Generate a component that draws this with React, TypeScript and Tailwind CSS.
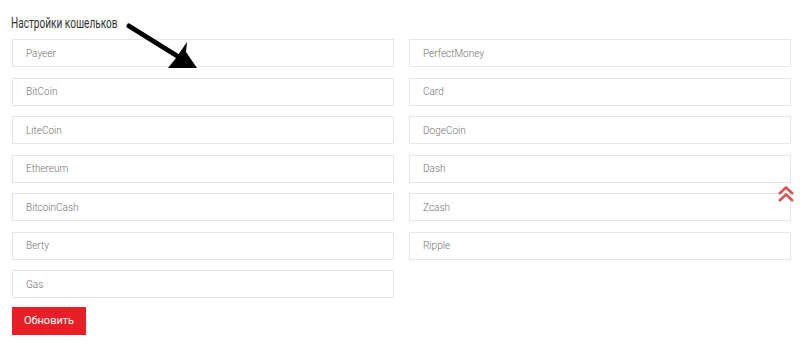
const wallets = [
  'Payeer',
  'PerfectMoney',
  'BitCoin',
  'Card',
  'LiteCoin',
  'DogeCoin',
  'Ethereum',
  'Dash',
  'BitcoinCash',
  'Zcash',
  'Berty',
  'Ripple',
  'Gas',
];

export default function App() {
  return (
    <div className="relative w-[805px] h-[348px] bg-white font-['Roboto',sans-serif] overflow-hidden">
      <div className="pl-[12px] pr-[14px] pt-[14px]">
        <h2 className="text-[14px] leading-[18px] text-[#333] font-['Roboto',sans-serif] -ml-[1px] origin-left scale-x-[0.72] whitespace-nowrap">
          Настройки кошельков
        </h2>
        <form className="mt-[7px]">
          <div className="grid grid-cols-2 gap-x-[15px] gap-y-[10.5px]">
            {wallets.map((w) => (
              <input
                key={w}
                type="text"
                placeholder={w}
                className="h-[28px] w-full border border-[#e6e6e6] bg-white px-[13px] text-[10px] font-light text-[#555] placeholder:text-[#707070] outline-none"
              />
            ))}
          </div>
          <button
            type="button"
            className="mt-[9px] h-[28px] w-[74px] bg-[#e81f26] text-[11px] text-white"
          >
            Обновить
          </button>
        </form>
      </div>

      {/* arrow annotation */}
      <svg className="absolute left-[120px] top-[18px]" width="90" height="60" viewBox="120 18 90 60">
        <line x1="129" y1="26" x2="182" y2="59" stroke="#000" strokeWidth="5" strokeLinecap="round" />
        <polygon points="197,68 168,68 176,58 187,42 186,52" fill="#000" />
      </svg>

      {/* scroll to top */}
      <svg className="absolute left-[777px] top-[185px]" width="18" height="18" viewBox="0 0 18 18" fill="none">
        <path d="M2 9 L9 2.5 L16 9" stroke="#d9534f" strokeWidth="2.5" />
        <path d="M2 16 L9 9.5 L16 16" stroke="#d9534f" strokeWidth="2.5" />
      </svg>
    </div>
  );
}
